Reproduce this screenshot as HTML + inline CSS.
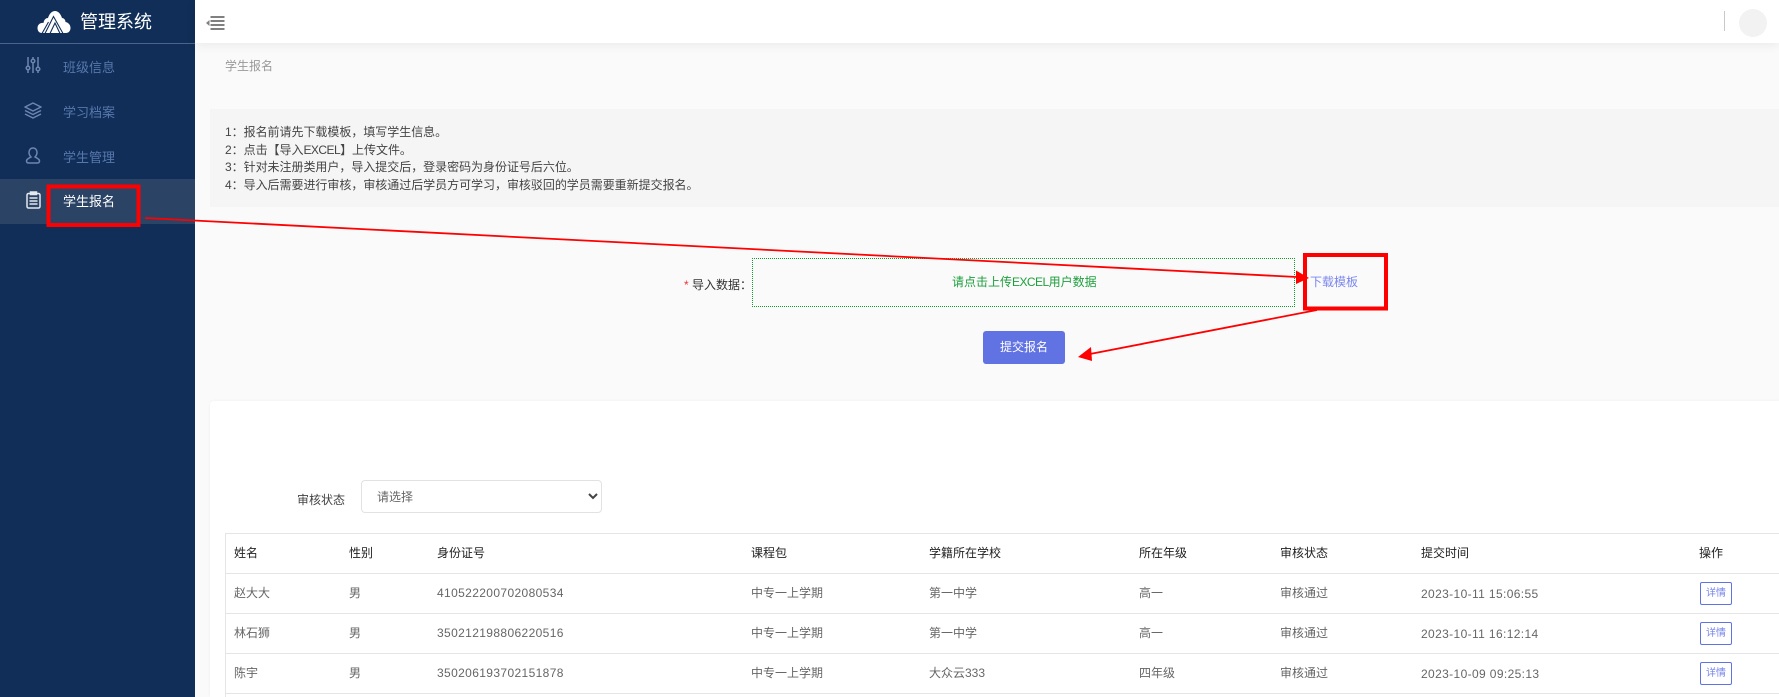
<!DOCTYPE html>
<html lang="zh">
<head>
<meta charset="utf-8">
<title>管理系统</title>
<style>
*{box-sizing:border-box}
html,body{margin:0;padding:0;width:1779px;height:697px;overflow:hidden;background:#fafafa;font-family:"Liberation Sans","Noto Sans CJK SC",sans-serif;font-size:12px;color:#333}
.abs,.t{position:absolute}
.t{white-space:nowrap;line-height:16px}
#side{position:absolute;left:0;top:0;width:195px;height:697px;background:#112e58}
#side .hr{position:absolute;left:0;top:43px;width:195px;height:1px;background:#4b638a}
#side .active{position:absolute;left:0;top:179px;width:195px;height:45px;background:#2b4365}
.mi{position:absolute;left:63px;font-size:13px;line-height:18px;color:#5877ac;white-space:nowrap}
#head{position:absolute;left:195px;top:0;width:1584px;height:43px;background:#fff;box-shadow:0 2px 10px rgba(0,0,0,.07)}
#note{position:absolute;left:210px;top:109px;width:1569px;height:98px;background:#f5f5f5;color:#444}
#note div{position:absolute;left:15px;white-space:nowrap;line-height:18px;height:18px;letter-spacing:-.03px}
.x{letter-spacing:-.55px}
#card{position:absolute;left:210px;top:401px;width:1569px;height:296px;background:#fff;border-radius:4px 0 0 0;box-shadow:0 0 3px rgba(0,0,0,.04)}
.hl{position:absolute;left:225px;width:1554px;height:1px;background:#e5e5e5}
.th{position:absolute;white-space:nowrap;line-height:16px;color:#222}
.td{position:absolute;white-space:nowrap;line-height:16px;color:#666}
.num{letter-spacing:.37px}
.btn{position:absolute;left:1700px;width:32px;height:23px;border:1px solid #6173e3;border-radius:2px;color:#7583ea;font-size:10px;line-height:21px;text-align:center;background:#fff}
select{position:absolute;left:361px;top:480px;width:241px;height:33px;border:1px solid #e2e2e2;border-radius:4px;background:#fff;appearance:none;-webkit-appearance:none;padding:0 15px;font:12px "Liberation Sans","Noto Sans CJK SC",sans-serif;color:#666;outline:none}
</style>
</head>
<body>
<div id="side">
  <svg class="abs" style="left:37px;top:10px" width="34" height="24" viewBox="0 0 34 24">
    <path fill="#fff" d="M5 23C1.500 23 .5 20 .5 18 .5 14.500 3.500 12.500 6.500 13 7 9.500 9 8 11 8 12.500 3.500 15 1 18 1 21 1 23.500 3.500 25 8 27 8 28.500 10 28.500 12 31.500 12.500 33.500 15 33.500 18 33.500 21 31.500 23 29 23Z"/>
    <path fill="none" stroke="#112e58" stroke-width="1.100" d="M8 23.500 16.500 6.500 26 23.500M13 23.500 18 13 23 23.500M5 23.500 11.500 12"/>
  </svg>
  <div class="t" style="left:80px;top:11px;font-size:18px;line-height:22px;color:#fff">管理系统</div>
  <div class="hr"></div>

  <svg class="abs" style="left:25px;top:56px" width="16" height="18" viewBox="0 0 16 18" fill="none" stroke="#6d86b0" stroke-width="1.500">
    <path d="M3 1V10M3 14V17M8 1V3M8 7V17M13 1V11M13 15V17"/>
    <circle cx="3" cy="12" r="1.800"/><circle cx="8" cy="5" r="1.800"/><circle cx="13" cy="13" r="1.800"/>
  </svg>
  <div class="mi" style="top:59px">班级信息</div>

  <svg class="abs" style="left:24px;top:102px" width="18" height="17" viewBox="0 0 18 17" fill="none" stroke="#6d86b0" stroke-width="1.500" stroke-linejoin="round">
    <path d="M9 1 17 5 9 9 1 5ZM1 8.500 9 12.500 17 8.500M1 12 9 16 17 12"/>
  </svg>
  <div class="mi" style="top:104px">学习档案</div>

  <svg class="abs" style="left:25px;top:147px" width="16" height="17" viewBox="0 0 16 17" fill="none" stroke="#6d86b0" stroke-width="1.500">
    <path d="M8 1C5.500 1 4 3 4 5.500 4 7.500 5 9 6 10 4 11 1.500 12 1.500 14 1.500 15.500 2.500 16 4 16H12C13.500 16 14.500 15.500 14.500 14 14.500 12 12 11 10 10 11 9 12 7.500 12 5.500 12 3 10.500 1 8 1Z"/>
  </svg>
  <div class="mi" style="top:149px">学生管理</div>

  <div class="active"></div>
  <svg class="abs" style="left:26px;top:191px" width="15" height="18" viewBox="0 0 15 18" fill="none" stroke="#e4e8ef" stroke-width="1.500">
    <rect x="1" y="2.500" width="13" height="14.500" rx="1.500"/>
    <rect x="4.500" y="1" width="6" height="2.500" fill="#e4e8ef"/>
    <path d="M3.500 7H11.500M3.500 10H11.500M3.500 13H11.500"/>
  </svg>
  <div class="mi" style="top:193px;color:#fff">学生报名</div>
</div>

<div id="head"></div>
<svg class="abs" style="left:206px;top:15px" width="19" height="16" viewBox="0 0 19 16" fill="#808080">
  <rect x="4.500" y="1" width="14" height="2"/><rect x="4.500" y="5" width="14" height="2"/><rect x="4.500" y="9" width="14" height="2"/><rect x="4.500" y="13" width="14" height="2"/>
  <path d="M0 8 3.500 5V11Z"/>
</svg>
<div class="abs" style="left:1724px;top:11px;width:1px;height:20px;background:#c9c9c9"></div>
<div class="abs" style="left:1739px;top:9px;width:28px;height:28px;border-radius:50%;background:#f2f2f2"></div>

<div class="t" style="left:225px;top:58px;color:#999">学生报名</div>

<div id="note">
  <div style="top:14px">1：报名前请先下载模板，填写学生信息。</div>
  <div style="top:32px">2：点击【导入<span class="x">EXCEL</span>】上传文件。</div>
  <div style="top:49px">3：针对未注册类用户，导入提交后，登录密码为身份证号后六位。</div>
  <div style="top:67px">4：导入后需要进行审核，审核通过后学员方可学习，审核驳回的学员需要重新提交报名。</div>
</div>

<div class="t" style="left:684px;top:277px;color:#333"><span style="color:#e33">*</span> 导入数据：</div>
<div class="abs" style="left:752px;top:258px;width:543px;height:49px;border:1px dotted #12992f"></div>
<div class="t" style="left:952px;top:274px;color:#1c9f3c">请点击上传<span class="x">EXCEL</span>用户数据</div>
<div class="t" style="left:1310px;top:274px;color:#7b87ee">下载模板</div>
<div class="abs" style="left:983px;top:331px;width:82px;height:33px;background:#6173e3;border-radius:3px;color:#fff;text-align:center;line-height:33px">提交报名</div>

<div id="card"></div>
<div class="t" style="left:297px;top:492px;color:#444">审核状态</div>
<select><option>请选择</option></select>
<svg class="abs" style="left:588px;top:492px" width="10" height="8" viewBox="0 0 10 8" fill="none" stroke="#444" stroke-width="2"><path d="M1 2 5 6 9 2"/></svg>

<div class="abs" style="left:225px;top:533px;width:1px;height:164px;background:#e5e5e5"></div>
<div class="hl" style="top:533px"></div>
<div class="hl" style="top:573px"></div>
<div class="hl" style="top:613px"></div>
<div class="hl" style="top:653px"></div>
<div class="hl" style="top:693px"></div>

<div class="th" style="left:234px;top:545px">姓名</div>
<div class="th" style="left:349px;top:545px">性别</div>
<div class="th" style="left:437px;top:545px">身份证号</div>
<div class="th" style="left:751px;top:545px">课程包</div>
<div class="th" style="left:929px;top:545px">学籍所在学校</div>
<div class="th" style="left:1139px;top:545px">所在年级</div>
<div class="th" style="left:1280px;top:545px">审核状态</div>
<div class="th" style="left:1421px;top:545px">提交时间</div>
<div class="th" style="left:1699px;top:545px">操作</div>

<div class="td" style="left:234px;top:585px">赵大大</div>
<div class="td" style="left:349px;top:585px">男</div>
<div class="td num" style="left:437px;top:585px">410522200702080534</div>
<div class="td" style="left:751px;top:585px">中专一上学期</div>
<div class="td" style="left:929px;top:585px">第一中学</div>
<div class="td" style="left:1139px;top:585px">高一</div>
<div class="td" style="left:1280px;top:585px">审核通过</div>
<div class="td num" style="left:1421px;top:586px">2023-10-11 15:06:55</div>
<div class="btn" style="top:582px">详情</div>

<div class="td" style="left:234px;top:625px">林石狮</div>
<div class="td" style="left:349px;top:625px">男</div>
<div class="td num" style="left:437px;top:625px">350212198806220516</div>
<div class="td" style="left:751px;top:625px">中专一上学期</div>
<div class="td" style="left:929px;top:625px">第一中学</div>
<div class="td" style="left:1139px;top:625px">高一</div>
<div class="td" style="left:1280px;top:625px">审核通过</div>
<div class="td num" style="left:1421px;top:626px">2023-10-11 16:12:14</div>
<div class="btn" style="top:622px">详情</div>

<div class="td" style="left:234px;top:665px">陈宇</div>
<div class="td" style="left:349px;top:665px">男</div>
<div class="td num" style="left:437px;top:665px">350206193702151878</div>
<div class="td" style="left:751px;top:665px">中专一上学期</div>
<div class="td" style="left:929px;top:665px">大众云333</div>
<div class="td" style="left:1139px;top:665px">四年级</div>
<div class="td" style="left:1280px;top:665px">审核通过</div>
<div class="td num" style="left:1421px;top:666px">2023-10-09 09:25:13</div>
<div class="btn" style="top:662px">详情</div>

<svg class="abs" style="left:0;top:0;pointer-events:none" width="1779" height="697" viewBox="0 0 1779 697" fill="none">
  <rect x="48.500" y="186.500" width="90" height="38.500" stroke="#f00" stroke-width="4"/>
  <rect x="1305" y="255" width="81" height="53.500" stroke="#f00" stroke-width="4"/>
  <path d="M145 218 1297 277" stroke="#f00" stroke-width="1.800"/>
  <path d="M1309 278 1296 270.500 1296 284Z" fill="#f00"/>
  <path d="M1317 310 1090 354" stroke="#f00" stroke-width="1.800"/>
  <path d="M1078 357 1091 347 1092 361Z" fill="#f00"/>
</svg>
</body>
</html>
